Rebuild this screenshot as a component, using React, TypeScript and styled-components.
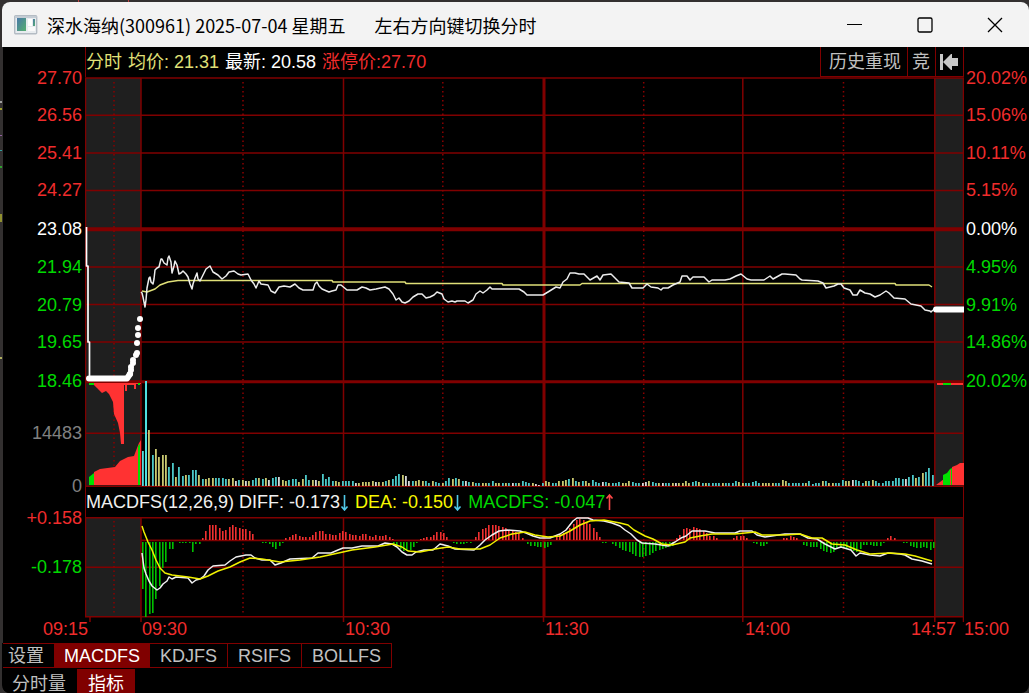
import React from "react";
import styled, { createGlobalStyle } from "styled-components";

const GRID = "#800000";
const RED = "#ff3232";
const TEXT_RED = "#f02c2c";
const GREEN = "#00d800";
const CYAN = "#4fe0e0";
const YELLOW = "#e0e078";
const SHADE = "#1f1f1f";
const EDGE = "#333030";

const GlobalStyle = createGlobalStyle`
  * { box-sizing: border-box; }
  body {
    margin: 0;
    overflow: hidden;
    background: #322e2e;
    font-family: "Liberation Sans", "Noto Sans CJK SC", sans-serif;
    font-size: 18px;
  }
  button { font: inherit; border: 0; padding: 0; margin: 0; background: none; cursor: pointer; }
`;

/* A sliver of the application behind the window shows along the top and left edges. */
const Desktop = styled.div`
  height: 100vh;
  padding: 2px 0 0 2px;
  background:
    linear-gradient(to right, transparent 78px, #c04040 78px 79px, transparent 79px 128px, #c04040 128px 129px, transparent 129px) 0 0 / 100% 2px no-repeat,
    linear-gradient(transparent 101px, #a0a0a0 101px 103px, transparent 103px 108px, #a0a030 108px 110px, transparent 110px 135px, #9060a0 135px 136px, transparent 136px 150px, #30a0a0 150px 151px, transparent 151px 166px, #30a030 166px 168px, transparent 168px 214px, #909030 214px 222px, transparent 222px 357px, #b0b060 357px 359px, transparent 359px) 0 0 / 2px 100% no-repeat,
    ${EDGE};
`;

const Window = styled.div`
  display: flex;
  flex-direction: column;
  height: 100%;
  overflow: hidden;
  border-radius: 8px;
  background: #000;
`;

const TitleBar = styled.header`
  display: flex;
  flex: none;
  align-items: center;
  height: 45px;
  padding-left: 12px;
  background: #f3f3f3;
  color: #000;
`;

const Title = styled.h1`
  display: flex;
  flex: 1;
  gap: 29px;
  margin: 0 0 0 9px;
  font-family: "Noto Sans CJK SC", sans-serif;
  font-size: 18px;
  font-weight: 400;
  line-height: 24px;
  white-space: nowrap;
`;

const WindowButton = styled.button`
  display: flex;
  align-items: center;
  justify-content: center;
  width: 70px;
  height: 45px;
  padding-left: 2px;
`;

const Board = styled.main`
  display: grid;
  flex: none;
  grid-template-columns: 82px minmax(0, 1fr) 65px;
  border-left: 1px solid ${EDGE};
`;

const Scale = styled.div<{ $side: "left" | "right" }>`
  padding: 12px ${(p) => (p.$side === "left" ? 3 : 0)}px 0 ${(p) => (p.$side === "right" ? 2 : 0)}px;
  text-align: ${(p) => (p.$side === "left" ? "right" : "left")};
`;

const ScaleLabel = styled.div<{ $height: number; $color: string }>`
  height: ${(p) => p.$height}px;
  line-height: ${(p) => p.$height}px;
  color: ${(p) => p.$color};
  white-space: nowrap;
`;

const ChartColumn = styled.section`
  display: flex;
  flex-direction: column;
  min-width: 0;
`;

const InfoBar = styled.div`
  display: flex;
  height: 30px;
  border: solid ${GRID};
  border-width: 0 1px;
  gap: 6px;
  line-height: 30px;
  white-space: nowrap;
`;

const Reading = styled.span<{ $color: string }>`
  display: inline-flex;
  align-items: center;
  color: ${(p) => p.$color};
  white-space: pre;
`;

const ToolGroup = styled.div`
  display: flex;
  margin-left: auto;
`;

const ToolButton = styled.button`
  display: flex;
  align-items: center;
  justify-content: center;
  height: 30px;
  padding: 1px 4px 0 4px;
  border-left: 1px solid ${GRID};
  border-bottom: 1px solid ${GRID};
  color: #c0c0c0;
  line-height: 28px;
  &:first-child { padding: 1px 6px 0 8px; }
  &:nth-child(2) { padding: 1px 5px 0 4px; }
`;

const Plot = styled.svg<{ $height: number }>`
  display: block;
  width: 100%;
  height: ${(p) => p.$height}px;
`;

const TimeAxis = styled.div`
  display: grid;
  flex: none;
  grid-template-columns: 85px 54fr 203fr 200fr 200fr 166fr 53fr 65px;
  height: 21px;
  border-left: 1px solid ${EDGE};
  color: ${TEXT_RED};
  line-height: 14px;
  white-space: nowrap;
  time:first-child { text-align: right; }
  time:nth-child(2) { grid-column: 3; }
`;

const TabRow = styled.nav<{ $framed?: boolean }>`
  display: flex;
  flex: none;
  align-self: flex-start;
  height: ${(p) => (p.$framed ? 25 : 30)}px;
  margin: 0 0 1px 1px;
  border: solid ${GRID};
  border-width: ${(p) => (p.$framed ? "1px 1px 1px 0" : "0")};
`;

const Tab = styled.button<{ $active?: boolean; $wide?: boolean; $divided?: boolean }>`
  padding: 0 ${(p) => (p.$wide ? 11 : 10)}px;
  border-left: ${(p) => (p.$divided ? 1 : 0)}px solid ${GRID};
  background: ${(p) => (p.$active ? GRID : "#000")};
  color: ${(p) => (p.$active ? "#fff" : "#c0c0c0")};
  line-height: 24px;
  white-space: nowrap;
  &:first-child { padding-left: ${(p) => (p.$wide ? 9 : 5)}px; }
`;

/* ---------- data ---------- */

type Label = [string, number, string];

const leftLabels: Label[] = [
  ["27.70", 38, TEXT_RED], ["26.56", 37, TEXT_RED], ["25.41", 38, TEXT_RED], ["24.27", 37, TEXT_RED],
  ["23.08", 40, "#fff"], ["21.94", 37, GREEN], ["20.79", 38, GREEN], ["19.65", 37, GREEN],
  ["18.46", 41, GREEN], ["14483", 63, "#808080"], ["0", 42, "#808080"],
  ["+0.158", 22, TEXT_RED], ["-0.178", 76, GREEN],
];

const rightLabels: Label[] = [
  ["20.02%", 38, TEXT_RED], ["15.06%", 37, TEXT_RED], ["10.11%", 38, TEXT_RED], ["5.15%", 37, TEXT_RED],
  ["0.00%", 40, "#fff"], ["4.95%", 37, GREEN], ["9.91%", 38, GREEN], ["14.86%", 37, GREEN],
  ["20.02%", 41, GREEN],
];

const times = ["09:15", "09:30", "10:30", "11:30", "14:00", "14:57", "15:00"];

const priceLine =
  "141,292 142,293 143,297 145,307 146,300 147,288 149,278 150,277 151,282 153,284 154,279 155,270 157,268 159,267 161,259 162,259 164,263 167,265 168,258 169,256 171,262 172,273 174,266 175,261 177,265 179,274 181,273 183,271 186,274 188,277 190,284 192,289 193,284 195,278 197,273 198,279 200,281 203,275 206,269 210,266 213,272 218,275 222,279 226,276 229,272 234,271 238,274 241,275 248,274 251,280 254,284 256,288 259,281 261,284 268,285 271,291 275,293 279,287 284,286 290,287 295,284 299,288 303,290 313,290 315,284 317,282 319,286 322,289 329,292 332,291 336,290 338,285 341,285 347,290 357,290 362,287 366,288 370,290 376,289 385,287 389,289 393,294 396,300 399,298 402,302 405,303 409,301 413,297 418,294 422,294 426,298 430,297 434,295 437,292 442,294 444,299 448,302 452,301 455,302 457,301 465,301 468,303 473,300 476,294 480,291 483,293 487,290 490,287 492,289 519,289 524,292 527,295 543,295 548,292 556,287 560,288 563,282 567,279 570,273 575,273 579,274 584,274 590,280 597,276 600,280 603,275 611,274 615,278 619,282 629,283 632,288 643,288 647,284 651,287 658,288 661,290 663,288 668,288 673,285 680,282 682,276 687,276 690,280 693,277 704,277 709,282 712,280 725,280 730,279 736,276 741,274 747,279 751,280 764,280 770,276 773,279 782,274 785,274 796,275 800,279 802,280 818,281 823,283 826,288 834,286 838,284 841,284 844,288 850,290 853,295 857,295 860,290 865,293 870,294 875,297 880,295 886,291 889,293 894,298 905,299 911,304 921,306 925,310 930,311 931,312 933,310";

const averageLine =
  "142,291 147,292 155,289 160,285 168,282 178,280.5 332,280.5 333,282 405,282 406,283.5 502,283.5 503,285 580,285 582,283.5 895,283.5 896,285 929,285 932,287";

const diffLine =
  "142,553 144,568 146,574 149,581 152,586 157,590 160,588 163,584 167,581 169,577 172,579 176,577 188,578 192,583 196,580 200,579 204,576 208,570 213,566 225,565 230,561 236,557 246,555 251,555 255,558 262,560 270,560 275,565 281,563 290,559 312,558 318,553 331,553 338,550 343,548 352,548 362,546 378,546 385,543 392,544 397,547 402,552 407,555 412,555 416,552 424,550 433,550 440,544 448,546 455,549 474,550 480,545 485,540 492,535 499,531 507,530 520,531 526,533 533,536 540,538 550,538 560,534 566,530 573,521 577,518 588,518 593,520 604,521 612,523 620,526 625,530 631,534 637,540 642,543 655,544 668,546 675,542 681,538 686,536 692,531 705,531 715,533 735,533 740,531 752,531 757,535 765,537 785,534 800,534 808,538 817,539 825,544 835,549 841,547 851,550 856,556 860,553 870,555 880,556 888,553 900,554 905,555 912,559 922,561 932,564";

const deaLine =
  "142,526 144,532 148,542 152,550 156,560 160,568 165,573 172,575 188,577 200,579 208,576 218,571 230,567 240,562 250,558 262,559 280,562 300,560 320,557 343,552 352,550 375,547 393,544 402,547 408,551 420,552 435,549 448,547 460,549 480,549 490,545 500,538 512,534 525,532 535,535 548,537 560,536 570,531 580,525 590,521 604,520 620,523 628,525 634,530 645,536 653,539 662,544 672,545 685,542 690,538 700,536 712,534 735,534 755,532 762,535 785,535 800,534 812,538 822,538 832,544 845,545 857,550 870,554 890,553 905,554 915,556 925,559 932,561";

const MINUTE = 10 / 3;

/* Traded volume per minute from 09:30, as bar heights, with a colour code for each bar. */
const volumes = [
  35, 105, 56, 31, 37, 29, 31, 31, 19, 23, 9, 19, 10, 11, 11, 16, 16, 11, 7, 7,
  8, 8, 8, 8, 8, 7, 7, 8, 5, 6, 6, 5, 5, 6, 8, 8, 7, 8, 6, 8,
  9, 9, 6, 5, 6, 7, 7, 4, 7, 11, 6, 6, 6, 5, 12, 7, 9, 5, 5, 4,
  5, 5, 5, 5, 3, 3, 4, 4, 4, 5, 4, 4, 4, 5, 6, 7, 10, 12, 11, 10,
  5, 5, 5, 6, 5, 5, 3, 5, 4, 3, 3, 5, 8, 7, 8, 7, 5, 5, 4, 4,
  3, 3, 3, 3, 3, 5, 3, 3, 3, 3, 3, 3, 3, 3, 5, 4, 3, 3, 2, 1,
  3, 5, 4, 3, 3, 5, 5, 6, 7, 8, 5, 4, 5, 5, 3, 6, 4, 3, 4, 4,
  3, 3, 3, 4, 3, 3, 5, 4, 3, 3, 3, 4, 5, 4, 3, 3, 3, 3, 3, 3,
  3, 3, 3, 5, 3, 4, 5, 4, 3, 3, 3, 3, 3, 3, 3, 3, 3, 3, 5, 4,
  3, 3, 3, 4, 5, 3, 3, 3, 3, 3, 3, 3, 6, 5, 3, 3, 3, 3, 3, 3,
  5, 2, 3, 3, 5, 5, 3, 3, 3, 3, 6, 5, 5, 6, 6, 5, 3, 5, 5, 6,
  5, 3, 3, 5, 5, 5, 8, 8, 7, 7, 9, 11, 8, 9, 13, 14, 18, 11,
];
const volumeTones =
  "ccycyyyyccyccycccycyyyccccyywcywyccycywccwyycccyyccywyccccyyccccwyyyyyw" +
  "yycycccywwcyyyccyccyccycycwcyccyyccyycycwcycccywwcyyccyyycycycyycccwcy" +
  "cccyyycccwwyccywccywyyyyccycyccccyccccyycccccyyyyccyycccccyccccycyycccyywcc" +
  "cycycccccccccwccycy";

/* MACD histogram: runs of bars, each run giving its first x and its values, one per minute. */
const histogram: [number, number[]][] = [
  [142, [-47, -75, -72, -71, -57, -44, -26, -20, -7, -7, 0, -1, -1, -1, -1, -10, -2, -2]],
  [202, [2, 9, 15, 15, 15, 12, 9, 10, 13, 15, 13, 12, 11, 11, 9, 6]],
  [262, [-1, -1, -2, -5, -7, -4, -1, 2, 3, 5, 6, 4, 3, 3, 3, 5, 8, 9, 9, 6, 6, 5, 5, 7, 9, 8, 6, 5, 5, 4, 6, 6, 4, 3, 5, 4, 4, 5, 3, 1]],
  [393, [-2, -4, -7, -9, -9, -8, -5, -1, 1, 2, 3, 3, 5, 8, 8, 7, 3]],
  [453, [-1, -2, -2, -2, -1, -1]],
  [475, [3, 8, 11, 12, 15, 15, 15, 14, 13, 12, 10, 9, 8, 7, 2]],
  [527, [-2, -4, -4, -5, -5, -6, -5, -3]],
  [556, [3, 6, 7, 8, 12, 16, 20, 21, 20, 18, 16, 12, 8, 3]],
  [602, [-1, -1, 0, -2, -4, -6, -8, -9, -10, -12, -14, -15, -15, -14, -13, -11, -9, -8, -7, -6, -5, -4]],
  [676, [2, 5, 11, 12, 11, 13, 12, 11, 9, 7, 4, 4, 2]],
  [733, [2, 4, 4, 4, 2]],
  [753, [-1, -2, -4, -4, -2]],
  [783, [2, 2, 4, 3, 2]],
  [803, [-3, -4, -5, -5, -5, -7, -9, -10, -11, -10, -7, -5, -6, -7, -8, -9, -10, -7, -3, -3, -3, -4, -4, -4, -1]],
  [887, [2, 4, 2]],
  [903, [-1, -1, -4, -5, -6, -6, -5, -6, -8, -6]],
];

const toneColor: Record<string, string> = { c: "#4cc8c8", y: "#c8c870", w: "#d8d8d8" };

/* ---------- chart pieces ---------- */

const VerticalLines = ({ top, bottom }: { top: number; bottom: number }) => (
  <>
    <g stroke={GRID} strokeWidth={1.5}>
      {[85.5, 141, 343.5, 742.8, 934.8, 963.5].map((x) => (
        <line key={x} x1={x} x2={x} y1={top} y2={bottom} />
      ))}
      <line x1={544} x2={544} y1={top} y2={bottom} strokeWidth={3} />
    </g>
    <g stroke="#8c0000" strokeWidth={1.5} strokeDasharray="1.5 3">
      {[114, 243, 442.8, 643.7, 843.5].map((x) => (
        <line key={x} x1={x} x2={x} y1={top + 4} y2={bottom - 2} />
      ))}
    </g>
  </>
);

const auctionDots: [number, number][] = [
  [130, 374], [131, 370], [131, 367], [133, 363], [133, 360], [136, 355], [137, 353], [137, 343], [138, 335], [138, 328], [140, 319],
];

const PriceChart = () => (
  <Plot $height={410} viewBox="85 77 879 410" preserveAspectRatio="none" role="img" aria-label="分时">
    <rect x={86} y={78} width={55} height={408} fill={SHADE} />
    <rect x={935} y={78} width={28} height={408} fill={SHADE} />
    <g stroke={GRID} strokeWidth={1.5}>
      {[78, 115.3, 153, 190.5, 267, 304.5, 342, 433.3, 486.2].map((y) => (
        <line key={y} x1={85} x2={964} y1={y} y2={y} />
      ))}
      <line x1={85} x2={964} y1={229.3} y2={229.3} strokeWidth={4} />
      <line x1={85} x2={964} y1={381.7} y2={381.7} strokeWidth={3} />
    </g>
    <VerticalLines top={78} bottom={487} />

    <path fill={RED} d="M92 383L97 388L102 393L106 391L109 394L113 402L114 414L118 423L120 433L121 444H124V385H125V391H127V385H134V389H136V384H141V383Z" />
    <path fill={RED} d="M94 485V472L100 469L115 467L120 461L128 457L134 456L137 448L139 443L141 440V485Z" />
    <path fill="#00e000" d="M89 383H94V385H89ZM138 383H140V385H138ZM89 485V477L94 473V485ZM138 485V446L140 444V485Z" />
    <path fill={RED} d="M936 485L940 482L944 479V485ZM952 485V467L957 465L960 463H964V485ZM937 383H963V385H937Z" />
    <path fill="#00e000" d="M943 485V475L947 473L950 469L952 468V485ZM943 383H951V385H943Z" />
    <path fill={RED} d="M950 470H951V485H950Z" />

    {volumes.map((h, i) => {
      const x = Math.round(141.5 + i * MINUTE);
      return x < 934 ? (
        <rect key={i} x={x} y={485 - h + 1} width={i === 1 ? 2 : 1.8} height={h} fill={i < 2 ? CYAN : toneColor[volumeTones[i]] ?? toneColor.c} />
      ) : null;
    })}

    <g fill="none" strokeLinejoin="round">
      <polyline points={averageLine} stroke={YELLOW} strokeWidth={1.5} />
      <polyline points={priceLine} stroke="#ececec" strokeWidth={1.5} />
      <path d="M86.5 227V266H88V342H89.5V378" stroke="#fff" strokeWidth={1.7} />
      <path d="M89 378.5H127L130 374" stroke="#fff" strokeWidth={6} strokeLinecap="round" />
      <path d="M936 309.5H964" stroke="#fff" strokeWidth={6} strokeLinecap="round" />
    </g>
    {auctionDots.map(([x, y]) => (
      <circle key={y} cx={x} cy={y} r={3} fill="#fff" />
    ))}
  </Plot>
);

const MacdChart = () => (
  <Plot $height={105} viewBox="85 517 879 105" preserveAspectRatio="none" role="img" aria-label="MACDFS">
    <rect x={86} y={518} width={55} height={99} fill={SHADE} />
    <rect x={935} y={518} width={28} height={99} fill={SHADE} />
    <g stroke={GRID} strokeWidth={1.5}>
      {[517.8, 567.2, 616.7].map((y) => (
        <line key={y} x1={85} x2={964} y1={y} y2={y} />
      ))}
      <line x1={141} x2={933} y1={540.4} y2={540.4} strokeWidth={1.7} />
      {[90, 141, 343.5, 543.5, 742.8, 934.8, 963.5].map((x) => (
        <line key={x} x1={x} x2={x} y1={617} y2={622} />
      ))}
    </g>
    <VerticalLines top={517} bottom={617} />
    {histogram.map(([start, values]) =>
      values.map((v, i) => (
        <rect
          key={`${start}-${i}`}
          x={Math.round(start + i * MINUTE)}
          y={v > 0 ? 540 - v : 542}
          width={1.6}
          height={Math.abs(v)}
          fill={v > 0 ? "#f03030" : "#00c000"}
        />
      ))
    )}
    <g fill="none" strokeLinejoin="round">
      <polyline points={diffLine} stroke="#f0f0f0" strokeWidth={1.5} />
      <polyline points={deaLine} stroke="#f0f000" strokeWidth={1.5} />
    </g>
  </Plot>
);

const Trend = ({ up }: { up?: boolean }) => (
  <svg width="9" height="18" viewBox="0 0 9 18" fill="none" stroke={up ? "#ff4848" : "#50c8e8"} strokeWidth="1.6" aria-hidden="true">
    {up ? <path d="M4.5 17V2M1.5 5.5L4.5 2L7.5 5.5" /> : <path d="M4.5 2V17M1.5 13.5L4.5 17L7.5 13.5" />}
  </svg>
);

const AppIcon = () => (
  <svg width="24" height="20" viewBox="0 0 24 20" aria-hidden="true">
    <defs>
      <linearGradient id="pane" x1="0" y1="0" x2="1" y2="1">
        <stop offset="0" stopColor="#4a78a8" />
        <stop offset="1" stopColor="#55b070" />
      </linearGradient>
    </defs>
    <rect x="0.7" y="0.7" width="22" height="18" rx="1" fill="#e8ecef" stroke="#b4bcc4" strokeWidth="1.4" />
    <rect x="1" y="1" width="21.5" height="2" fill="#c4ccd4" />
    <rect x="3" y="3" width="9" height="13" fill="url(#pane)" />
    <rect x="14" y="4" width="4" height="7" fill="#fff" />
    <rect x="19" y="4" width="2" height="7" fill="url(#pane)" />
    <rect x="14" y="12" width="7" height="4" fill="#fafafa" />
  </svg>
);

export default function App() {
  return (
    <Desktop>
      <GlobalStyle />
      <Window>
        <TitleBar>
          <AppIcon />
          <Title>
            <span>深水海纳(300961) 2025-07-04 星期五</span>
            <span>左右方向键切换分时</span>
          </Title>
          <WindowButton aria-label="最小化">
            <svg width="16" height="16" stroke="#000"><path d="M0 7.5H15" /></svg>
          </WindowButton>
          <WindowButton aria-label="最大化">
            <svg width="16" height="16" fill="none" stroke="#000" strokeWidth="1.3"><rect x="1" y="1" width="14" height="14" rx="1.5" /></svg>
          </WindowButton>
          <WindowButton aria-label="关闭">
            <svg width="16" height="16" stroke="#000" strokeWidth="1.3"><path d="M1 1L15 15M15 1L1 15" /></svg>
          </WindowButton>
        </TitleBar>

        <Board>
          <Scale $side="left">
            {leftLabels.map(([text, height, color], i) => (
              <ScaleLabel key={i} $height={height} $color={color}>{text}</ScaleLabel>
            ))}
          </Scale>

          <ChartColumn>
            <InfoBar>
              <Reading $color={YELLOW}>分时</Reading>
              <Reading $color={YELLOW}>均价: 21.31</Reading>
              <Reading $color="#fff">最新: 20.58</Reading>
              <Reading $color={TEXT_RED}>涨停价:27.70</Reading>
              <ToolGroup>
                <ToolButton>历史重现</ToolButton>
                <ToolButton>竞</ToolButton>
                <ToolButton aria-label="收起">
                  <svg width="19" height="18" viewBox="0 0 19 18" fill="#c8c8c8">
                    <path d="M0 1H3V17H0ZM3 9L11 1H12V5H18V13H12V17H11Z" />
                  </svg>
                </ToolButton>
              </ToolGroup>
            </InfoBar>
            <PriceChart />
            <InfoBar>
              <Reading $color="#f0f0f0">MACDFS(12,26,9) DIFF: -0.173<Trend /></Reading>
              <Reading $color="#f8f800">DEA: -0.150<Trend /></Reading>
              <Reading $color={GREEN}>MACDFS: -0.047<Trend up /></Reading>
            </InfoBar>
            <MacdChart />
          </ChartColumn>

          <Scale $side="right">
            {rightLabels.map(([text, height, color], i) => (
              <ScaleLabel key={i} $height={height} $color={color}>{text}</ScaleLabel>
            ))}
          </Scale>
        </Board>

        <TimeAxis>
          {times.map((t) => <time key={t}>{t}</time>)}
        </TimeAxis>

        <TabRow $framed>
          <Tab>设置</Tab>
          <Tab $active>MACDFS</Tab>
          <Tab>KDJFS</Tab>
          <Tab $divided>RSIFS</Tab>
          <Tab $divided>BOLLFS</Tab>
        </TabRow>
        <TabRow>
          <Tab $wide>分时量</Tab>
          <Tab $active $wide>指标</Tab>
        </TabRow>
      </Window>
    </Desktop>
  );
}
